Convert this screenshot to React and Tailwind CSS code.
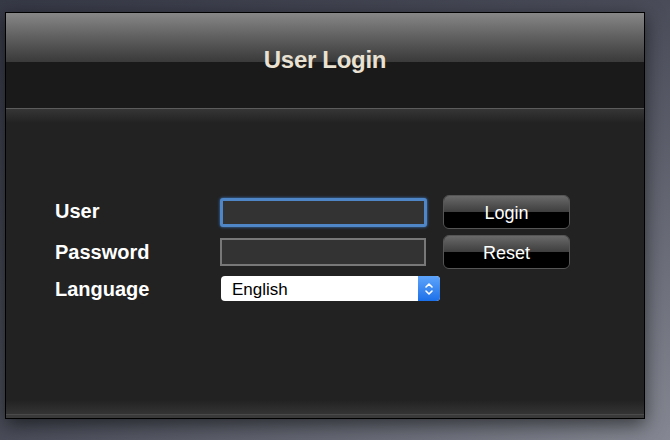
export default function App() {
  return (
    <div
      className="w-[670px] h-[440px] overflow-hidden bg-gradient-to-br from-[#363946] via-[#4a4d59] to-[#858892] pt-[12px] pl-[5px]"
      style={{ fontFamily: '"Liberation Sans", Arial, sans-serif' }}
    >
      <div className="w-[640px] h-[407px] flex flex-col border border-black bg-[#222] shadow-[0_6px_18px_rgba(0,0,0,0.55)]">
        {/* header */}
        <div className="h-[95px] flex flex-col">
          <div className="h-[49px] bg-gradient-to-b from-[#878787] to-[#3a3a3a]" />
          <div className="flex-1 bg-[#1a1a1a]" />
        </div>
        <div className="-mt-[95px] h-[95px] flex items-center justify-center">
          <h1 className="text-[24px] font-bold text-[#e9e1d2] tracking-[-0.3px] mt-[-2px]">User Login</h1>
        </div>
        <div className="h-px bg-[#5c5c5c]" />
        <div className="h-[14px] bg-gradient-to-b from-[#363636] to-[#222]" />

        {/* body */}
        <div className="flex-1 pl-[49px] pt-[72px]">
          <div className="grid grid-cols-[149px_207px_127px] gap-x-[16px] grid-rows-[34px_34px_25px] gap-y-[6px]">
            <div className="flex items-center text-[20px] font-bold text-white -mt-[3px]">User</div>
            <div className="flex items-center">
              <div className="w-[207px] h-[29px] rounded-[3px] border-[3px] border-[#4f86c8] shadow-[0_0_3px_#3d7fd0] bg-[#333]" />
            </div>
            <button className="rounded-[6px] border border-[#555] overflow-hidden flex flex-col relative">
              <div className="h-1/2 bg-gradient-to-b from-[#6a6a6a] to-[#3e3e3e]" />
              <div className="h-1/2 bg-black" />
              <span className="absolute inset-0 pt-[2px] flex items-center justify-center text-[18px] text-white">Login</span>
            </button>

            <div className="flex items-center text-[20px] font-bold text-white -mt-[1px]">Password</div>
            <div className="flex items-center">
              <div className="w-[206px] h-[28px] border-2 border-[#787878] bg-[#333]" />
            </div>
            <button className="rounded-[6px] border border-[#555] overflow-hidden flex flex-col relative">
              <div className="h-1/2 bg-gradient-to-b from-[#6a6a6a] to-[#3e3e3e]" />
              <div className="h-1/2 bg-black" />
              <span className="absolute inset-0 pt-[2px] flex items-center justify-center text-[18px] text-white">Reset</span>
            </button>

            <div className="flex items-center text-[20px] font-bold text-white mt-[2px]">Language</div>
            <div className="flex items-center mt-[2px] col-span-2">
              <div className="w-[219px] h-[25px] ml-px rounded-[4px] bg-white flex overflow-hidden">
                <span className="flex-1 pl-[11px] pt-[2px] flex items-center text-[17px] text-black">English</span>
                <span className="w-[22px] bg-gradient-to-b from-[#5da4fb] to-[#1b6fe9] flex items-center justify-center">
                  <svg width="10" height="16" viewBox="0 0 10 16" fill="none" stroke="white" strokeWidth="1.6" strokeLinecap="round" strokeLinejoin="round">
                    <path d="M2 6 L5 3 L8 6" />
                    <path d="M2 10 L5 13 L8 10" />
                  </svg>
                </span>
              </div>
            </div>
          </div>
        </div>

        {/* footer */}
        <div className="h-[14px] bg-gradient-to-b from-[#222] to-[#343434]" />
        <div className="h-px bg-[#4a4a4a]" />
        <div className="h-[3px] bg-[#3a3a3a]" />
      </div>
    </div>
  );
}
